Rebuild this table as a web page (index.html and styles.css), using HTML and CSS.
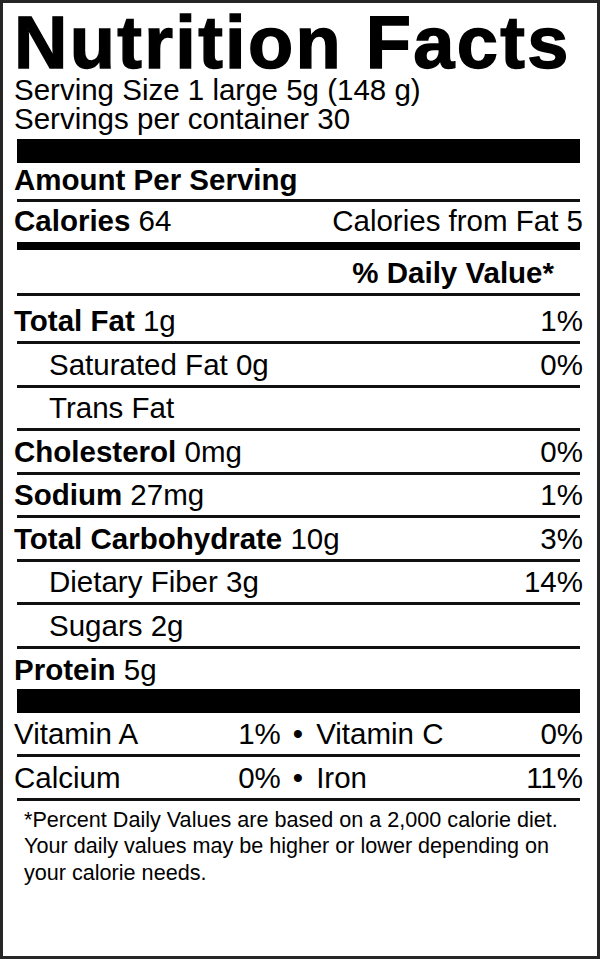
FILE: index.html
```html
<!DOCTYPE html>
<html lang="en">
<head>
<meta charset="utf-8">
<title>Nutrition Facts</title>
<link rel="stylesheet" href="styles.css">
</head>
<body>
<div class="label">
  <h1 class="title">Nutrition Facts</h1>
  <p class="serving">Serving Size 1 large 5g (148 g)</p>
  <p class="serving">Servings per container 30</p>
  <div class="bar bar-thick"></div>
  <div class="row row-amount"><b>Amount Per Serving</b></div>
  <div class="rule"></div>
  <div class="row row-cal"><span><b>Calories</b> 64</span><span>Calories from Fat 5</span></div>
  <div class="bar bar-mid"></div>
  <div class="row row-dv"><b>% Daily Value*</b></div>
  <div class="rule"></div>
  <div class="row row-first"><span><b>Total Fat</b> 1g</span><span>1%</span></div>
  <div class="rule"></div>
  <div class="row sub"><span>Saturated Fat 0g</span><span>0%</span></div>
  <div class="rule"></div>
  <div class="row sub"><span>Trans Fat</span></div>
  <div class="rule"></div>
  <div class="row"><span><b>Cholesterol</b> 0mg</span><span>0%</span></div>
  <div class="rule"></div>
  <div class="row"><span><b>Sodium</b> 27mg</span><span>1%</span></div>
  <div class="rule"></div>
  <div class="row"><span><b>Total Carbohydrate</b> 10g</span><span>3%</span></div>
  <div class="rule"></div>
  <div class="row sub"><span>Dietary Fiber 3g</span><span>14%</span></div>
  <div class="rule"></div>
  <div class="row sub"><span>Sugars 2g</span></div>
  <div class="rule"></div>
  <div class="row row-protein"><span><b>Protein</b> 5g</span></div>
  <div class="bar bar-thick"></div>
  <div class="row vit"><span class="half"><span>Vitamin A</span><span>1%</span></span><span class="dot">•</span><span class="half"><span>Vitamin C</span><span>0%</span></span></div>
  <div class="rule"></div>
  <div class="row vit"><span class="half"><span>Calcium</span><span>0%</span></span><span class="dot">•</span><span class="half"><span>Iron</span><span>11%</span></span></div>
  <div class="rule"></div>
  <p class="foot">*Percent Daily Values are based on a 2,000 calorie diet. Your daily values may be higher or lower depending on your calorie needs.</p>
</div>
</body>
</html>
```

FILE: styles.css
```css
* { box-sizing: border-box; }
html, body { margin: 0; padding: 0; background: #fff; }
body {
  font-family: "Liberation Sans", Arial, Helvetica, sans-serif;
  color: #000;
}
.label {
  width: 600px;
  height: 959px;
  border: 3px solid #262626;
  padding: 7px 14px 0 11px;
  display: flex;
  flex-direction: column;
  background: #fff;
}
.title {
  margin: 0;
  font-size: 74px;
  line-height: 65px;
  font-weight: 700;
  letter-spacing: 2.3px;
  -webkit-text-stroke: 1.4px #000;
  white-space: nowrap;
}
.serving {
  margin: 0;
  font-size: 29.5px;
  line-height: 29px;
  white-space: nowrap;
}
.bar { background: #000; margin: 0 3px; flex: none; }
.bar-thick { height: 24px; margin-top: 6px; }
.bar-mid { height: 8px; }
.rule { height: 3px; background: #111; margin: 0 3px; flex: none; }
.row {
  display: flex;
  justify-content: space-between;
  align-items: flex-end;
  height: 40.5px;
  padding-bottom: 6px;
  font-size: 29.5px;
  line-height: 29px;
  white-space: nowrap;
  flex: none;
}
.row b { font-weight: 700; }
.row-amount { height: 36px; padding-bottom: 5px; }
.row-cal { height: 40px; padding-bottom: 7px; }
.row-dv { height: 43px; justify-content: flex-end; padding-right: 29px; padding-bottom: 6px; }
.row-first { height: 45px; }
.row-protein { height: 40px; padding-bottom: 5px; }
.row-protein + .bar { margin-top: 0; }
.sub { padding-left: 35px; }
.vit { height: 41px; }
.half { display: flex; justify-content: space-between; flex: 1 1 0; }
.dot { padding: 0 13px 0 12px; }
.foot {
  margin: 6px 0 0 10px;
  font-size: 21.6px;
  line-height: 26.5px;
  padding-right: 10px;
}
```
